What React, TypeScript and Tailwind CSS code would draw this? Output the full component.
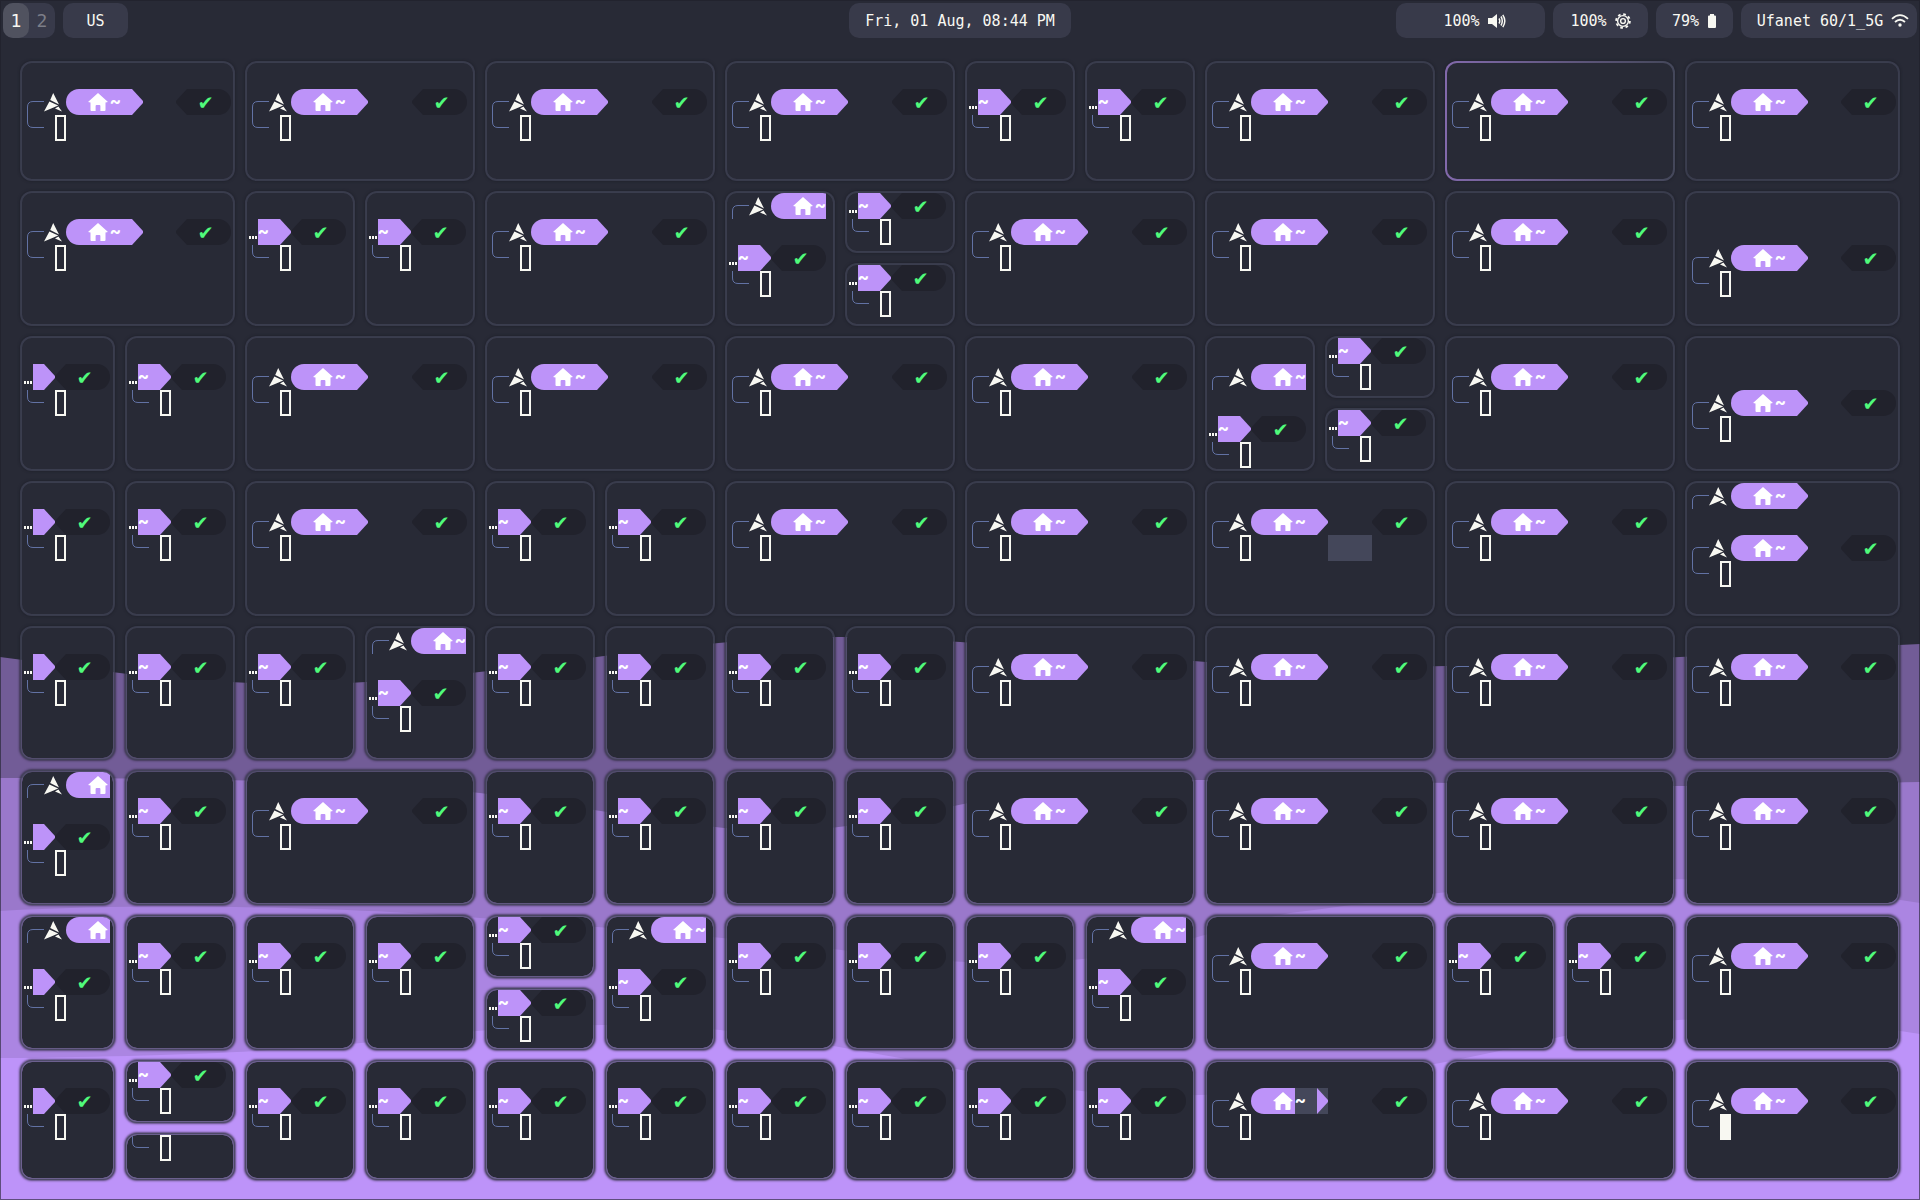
import React from "react";

type Line =
  | "blank"
  | "full"
  | "cut"
  | "cutShort"
  | "dots"
  | "dotsShort"
  | "input"
  | "focus"
  | "marked"
  | "block";

type CardProps = {
  /** Tailwind placement classes inside the surrounding grid or stack. */
  place?: string;
  /** Which terminal lines to draw, from the top. */
  lines: Line[];
  active?: boolean;
};

const Arch = () => (
  <svg viewBox="0 0 18 19" className="h-[19px] w-[18px]" aria-hidden="true">
    <path
      d="M9.2 0 L15 11.4 L6.2 7 Z M5.4 8.4 L14.2 12.6 L9.6 14.4 L0 18.6 Z M14.4 13.4 L18 18.6 L11 15.4 Z"
      fill="#f8f8f2"
    />
  </svg>
);

const House = () => (
  <svg viewBox="0 0 20 18" className="h-[18px] w-[20px]" aria-hidden="true">
    <path
      d="M10 0 L20 9 L17.5 9.6 L17.5 17 Q17.5 18 16.5 18 L12.4 18 L12.4 13 Q12.4 12 11.4 12 L8.6 12 Q7.6 12 7.6 13 L7.6 18 L3.5 18 Q2.5 18 2.5 17 L2.5 9.6 L0 9 Z"
      fill="#fff"
    />
  </svg>
);

/** Corner of the two-line prompt frame. */
const Frame = ({ bottom = false }: { bottom?: boolean }) => (
  <svg viewBox="0 0 22 26" className="h-[26px] w-[22px] shrink-0" fill="none" stroke="#6272a4" aria-hidden="true">
    <path d={bottom ? "M5.5 0 V7 Q5.5 12.5 11 12.5 H22" : "M5.5 26 V18 Q5.5 12.5 11 12.5 H22"} />
  </svg>
);

const Arrow = ({ fill }: { fill: string }) => (
  <svg viewBox="0 0 11 26" className="h-[26px] w-[11px] shrink-0" aria-hidden="true">
    <path d="M0 0 L11 12 V14 L0 26 Z" fill={fill} />
  </svg>
);

const Status = () => (
  <span className="ml-auto flex h-[26px] w-[55px] shrink-0">
    <svg viewBox="0 0 11 26" className="h-[26px] w-[11px] shrink-0" aria-hidden="true">
      <path d="M11 0 L0 12 V14 L11 26 Z" fill="#21222c" />
    </svg>
    <span className="flex w-[44px] justify-center rounded-r-full bg-[#21222c] pr-[7px] text-[22px] text-[#50fa7b]">
      ✔
    </span>
  </span>
);

const Tilde = ({ marked = false }: { marked?: boolean }) => (
  <span
    className={
      marked
        ? "w-[22px] shrink-0 bg-[#44475a] font-[Roboto,sans-serif] text-[17px] leading-[24px] font-black"
        : "w-[22px] shrink-0 bg-[#bd93f9] font-[Roboto,sans-serif] text-[17px] leading-[24px] font-black"
    }
  >
    ~
  </span>
);

const HomeStart = () => (
  <span className="flex w-[44px] shrink-0 items-center rounded-l-full bg-[#bd93f9] pl-[22px]">
    <House />
  </span>
);

function TermLine({ kind }: { kind: Line }) {
  if (kind === "blank") return <div className="h-[26px] shrink-0" />;
  if (kind === "input" || kind === "focus" || kind === "block")
    return (
      <div className="flex h-[26px] shrink-0">
        <Frame bottom />
        <span
          className={
            kind === "focus"
              ? "ml-[11px] w-[11px] shrink-0 bg-[#f8f8f2]"
              : "ml-[11px] w-[11px] shrink-0 border-2 border-[#f8f8f2]"
          }
        />
        {kind === "block" ? <span className="ml-[77px] w-[44px] bg-[#44475a]" /> : null}
      </div>
    );
  if (kind === "dots" || kind === "dotsShort")
    return (
      <div className="flex h-[26px] shrink-0 overflow-hidden">
        <span className="flex w-[11px] shrink-0 items-center justify-center gap-[1px] pt-[11px]">
          <i className="h-[3px] w-[2px] bg-[#f8f8f2]" />
          <i className="h-[3px] w-[2px] bg-[#f8f8f2]" />
          <i className="h-[3px] w-[2px] bg-[#f8f8f2]" />
        </span>
        {kind === "dots" ? <Tilde /> : <span className="w-[11px] shrink-0 bg-[#bd93f9]" />}
        <Arrow fill="#bd93f9" />
        <Status />
      </div>
    );
  return (
    <div className="flex h-[26px] shrink-0 overflow-hidden">
      <Frame />
      <span className="flex w-[22px] shrink-0 items-center">
        <Arch />
      </span>
      <HomeStart />
      {kind === "cutShort" ? null : (
        <>
          <Tilde marked={kind === "marked"} />
          <span className={kind === "marked" ? "bg-[#44475a]" : ""}>
            <Arrow fill="#bd93f9" />
          </span>
        </>
      )}
      {kind === "full" || kind === "marked" ? <Status /> : null}
    </div>
  );
}

function Card({ place = "", lines, active = false }: CardProps) {
  const body = (
    <div className="flex w-[round(down,100%,11px)] flex-col font-['DejaVu_Sans_Mono',monospace] text-[18px] leading-[26px] text-white">
      {lines.map((kind, i) => (
        <TermLine key={i} kind={kind} />
      ))}
    </div>
  );
  if (active)
    return (
      <section
        className={`min-h-0 min-w-0 rounded-[12px] bg-linear-to-r from-[#8269ab] to-[#44475a] p-[2px] shadow-[0_0_2px_1px_#1e202999] ${place}`}
      >
        <div className="h-full overflow-hidden rounded-[10px] bg-[#282a36]">{body}</div>
      </section>
    );
  return (
    <section
      className={`min-h-0 min-w-0 overflow-hidden rounded-[12px] border-2 border-[#44475aaa] bg-[#282a36] bg-clip-padding shadow-[0_0_2px_1px_#1e202999] ${place}`}
    >
      {body}
    </section>
  );
}

const W: Line[] = ["blank", "full", "input"];
const LOW: Line[] = ["blank", "blank", "full", "input"];
const N: Line[] = ["blank", "dots", "input"];
const S: Line[] = ["blank", "dotsShort", "input"];
const H: Line[] = ["dots", "input"];
const R: Line[] = ["cut", "blank", "dots", "input"];
const RS: Line[] = ["cutShort", "blank", "dotsShort", "input"];

const wide = (lines: Line[] = W, active = false) => ({ span: 2, stack: [lines], active });
const one = (lines: Line[] = N) => ({ span: 1, stack: [lines], active: false });
const two = (a: Line[] = H, b: Line[] = H) => ({ span: 1, stack: [a, b], active: false });

const rows = [
  [wide(), wide(), wide(), wide(), one(), one(), wide(), wide(W, true), wide()],
  [wide(), one(), one(), wide(), one(R), two(), wide(), wide(), wide(), wide(LOW)],
  [one(S), one(), wide(), wide(), wide(), wide(), one(["blank", "cut", "blank", "dots", "input"]), two(), wide(), wide(LOW)],
  [one(S), one(), wide(), one(), one(), wide(), wide(), wide(["blank", "full", "block"]), wide(), wide(["cut", "blank", "full", "input"])],
  [one(S), one(), one(), one(R), one(), one(), one(), one(), wide(), wide(), wide(), wide()],
  [one(RS), one(), wide(), one(), one(), one(), one(), wide(), wide(), wide(), wide()],
  [one(RS), one(), one(), one(), two(), one(R), one(), one(), one(), one(R), wide(), one(), one(), wide()],
  [one(S), two(H, ["input"]), one(), one(), one(), one(), one(), one(), one(), one(), wide(["blank", "marked", "input"]), wide(), wide(["blank", "full", "focus"])],
];

const Wallpaper = () => (
  <svg viewBox="0 0 1920 1200" preserveAspectRatio="none" className="absolute inset-0 h-full w-full" aria-hidden="true">
    <path fill="#725c97" d="M0 657 C80 667 160 683 300 684 C480 684 660 637 840 637 C980 637 1150 664 1320 667 C1560 668 1780 650 1920 644 V1200 H0 Z" />
    <path fill="#9a78cb" d="M0 778 C160 778 360 780 480 793 C620 812 700 830 780 831 C900 831 1000 778 1200 780 C1400 780 1500 786 1680 786 C1780 787 1860 783 1920 782 V1200 H0 Z" />
    <path fill="#ab85e2" d="M0 911 C160 902 360 908 480 918 C620 928 800 944 900 957 C1120 980 1200 930 1290 913 C1400 900 1500 880 1620 879 C1750 877 1840 891 1920 903 V1200 H0 Z" />
    <path fill="#bd93f9" d="M0 1058 C200 1056 300 1050 400 1039 C520 1024 640 1021 720 1030 C860 1046 960 1072 1060 1088 C1200 1110 1340 1080 1440 1063 C1540 1045 1600 1020 1710 1019 C1800 1018 1860 1024 1920 1034 V1200 H0 Z" />
  </svg>
);

const Pill = ({ className = "", children }: { className?: string; children: React.ReactNode }) => (
  <button className={`flex h-[35px] items-center justify-center gap-2 rounded-[10px] bg-[#383a4a] whitespace-pre ${className}`}>
    {children}
  </button>
);

export default function App() {
  return (
    <div className="relative flex h-screen flex-col overflow-hidden bg-[#282a36]">
      <Wallpaper />
      <header className="relative grid grid-cols-[1fr_auto_1fr] items-center px-[3px] pt-[3px] font-['DejaVu_Sans_Mono',monospace] text-[15px] leading-5 text-[#f8f8f2]">
        <div className="flex gap-2">
          <nav className="flex h-[35px] rounded-[10px] bg-[#383a4a] text-[18px]">
            <button className="w-[26px] rounded-[10px] bg-[#50525f]">1</button>
            <button className="w-[26px] text-[#7c7e88]">2</button>
          </nav>
          <Pill className="w-[65px]">US</Pill>
        </div>
        <Pill className="px-4">Fri, 01 Aug, 08:44 PM</Pill>
        <div className="flex justify-end gap-2">
          <Pill className="w-[149px] pl-2">
            100%
            <svg viewBox="0 0 18 14" className="h-[14px] w-[18px]" fill="none" stroke="#f8f8f2" strokeWidth="1.5" aria-hidden="true">
              <path d="M0 4 H4 L9 0 V14 L4 10 H0 Z" fill="#f8f8f2" stroke="none" />
              <path d="M11 4.5 Q12.6 7 11 9.5 M13 2.5 Q15.6 7 13 11.5 M14.8 .8 Q18.8 7 14.8 13.2" />
            </svg>
          </Pill>
          <Pill className="w-[95px]">
            100%
            <svg viewBox="0 0 16 16" className="h-4 w-4" fill="none" stroke="#f8f8f2" aria-hidden="true">
              <circle cx="8" cy="8" r="6.9" strokeWidth="1.8" strokeDasharray="2.7 2.72" />
              <circle cx="8" cy="8" r="5.4" strokeWidth="1.4" />
              <circle cx="8" cy="8" r="2.4" strokeWidth="1.4" />
            </svg>
          </Pill>
          <Pill className="w-[77px]">
            79%
            <svg viewBox="0 0 10 14" className="h-[14px] w-[10px]" aria-hidden="true">
              <path d="M3 0 H7 V1.5 H8 Q9 1.5 9 2.5 V13 Q9 14 8 14 H2 Q1 14 1 13 V2.5 Q1 1.5 2 1.5 H3 Z" fill="#f8f8f2" />
            </svg>
          </Pill>
          <Pill className="w-[176px] pl-2">
            Ufanet 60/1_5G
            <svg viewBox="0 0 18 13" className="h-[13px] w-[18px]" fill="none" stroke="#f8f8f2" strokeWidth="1.8" aria-hidden="true">
              <path d="M1 4.8 Q9 -2.6 17 4.8 M4 8 Q9 3.4 14 8" />
              <circle cx="9" cy="11" r="1.7" fill="#f8f8f2" stroke="none" />
            </svg>
          </Pill>
        </div>
      </header>
      <main className="relative grid min-h-0 flex-1 grid-rows-[120fr_135fr_135fr_135fr_134fr_135fr_135fr_120fr] gap-[10px] px-5 pt-[23px] pb-5">
        {rows.map((row, r) => (
          <div key={r} className="grid min-h-0 grid-cols-[95fr_repeat(14,110fr)_95fr] gap-[10px]">
            {row.map((cell, c) =>
              cell.stack.length === 2 ? (
                <div
                  key={c}
                  className={
                    r === 7
                      ? "grid min-h-0 grid-rows-[63fr_47fr] gap-[10px]"
                      : r === 6
                        ? "grid min-h-0 grid-rows-[63fr_62fr] gap-[10px]"
                        : "grid min-h-0 grid-rows-[62fr_63fr] gap-[10px]"
                  }
                >
                  <Card lines={cell.stack[0]} />
                  <Card lines={cell.stack[1]} />
                </div>
              ) : (
                <Card key={c} lines={cell.stack[0]} active={cell.active} place={cell.span === 2 ? "col-span-2" : ""} />
              ),
            )}
          </div>
        ))}
      </main>
      <div className="pointer-events-none absolute inset-0 border border-[#1e202999]" />
    </div>
  );
}
